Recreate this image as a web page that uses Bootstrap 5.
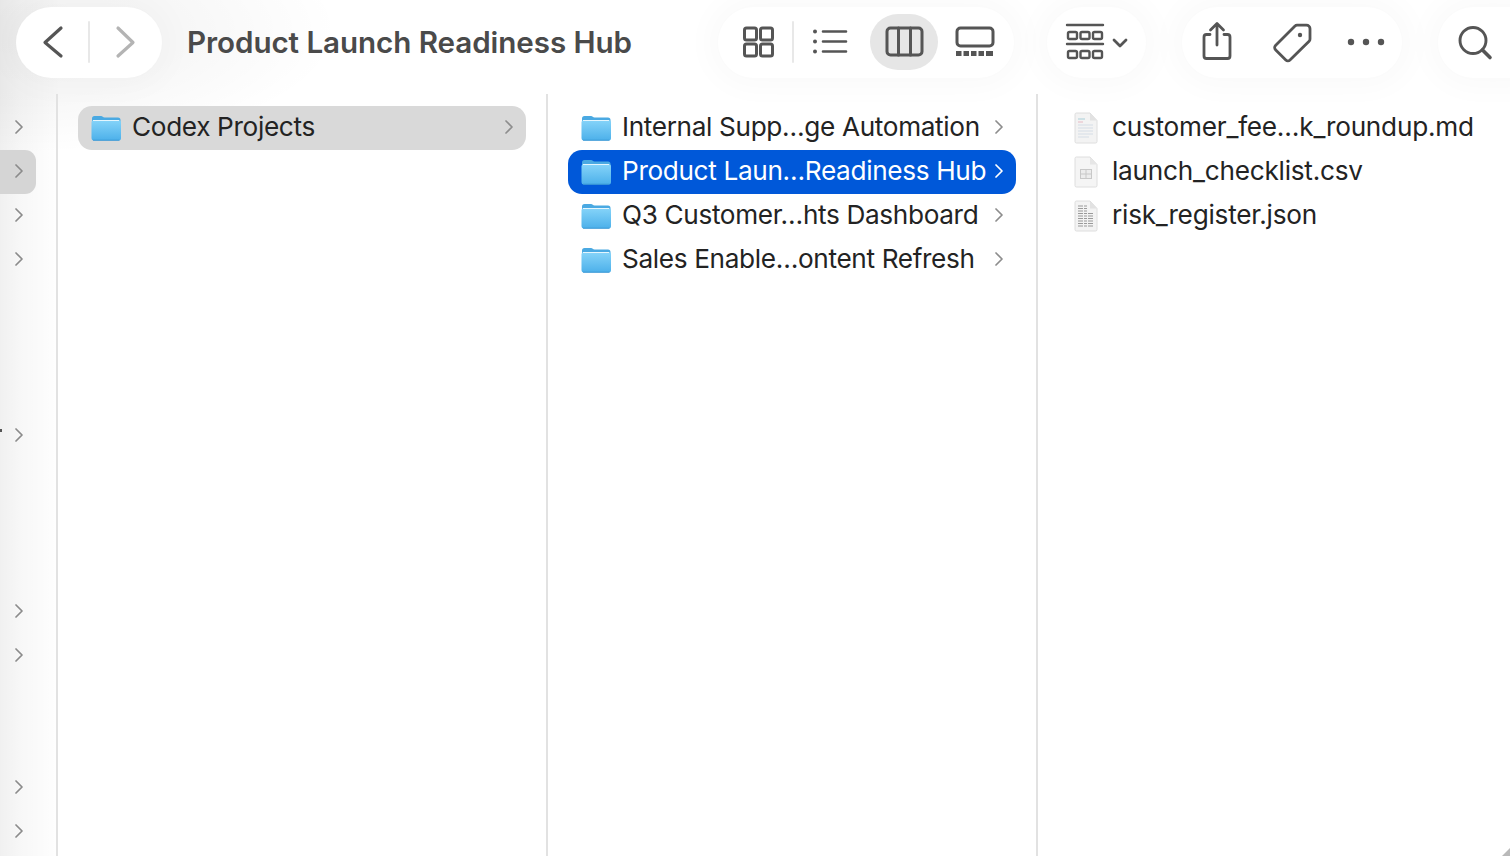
<!DOCTYPE html>
<html lang="en"><head><meta charset="utf-8"><title>Product Launch Readiness Hub</title>
<link href="https://cdn.jsdelivr.net/npm/bootstrap@5.3.0/dist/css/bootstrap.min.css" rel="stylesheet">
<style>
html,body{height:100%;margin:0;overflow:hidden;background:#fff;font-family:"Inter","Liberation Sans",sans-serif}
.frame{width:1510px;height:856px;position:relative;overflow:hidden;background:radial-gradient(ellipse 340px 125px at 0 30px,rgba(0,0,0,.045) 0,rgba(0,0,0,.03) 55%,rgba(0,0,0,0) 100%) no-repeat,linear-gradient(90deg,rgba(0,0,0,.06) 0,rgba(0,0,0,.03) 20px,rgba(0,0,0,.005) 57px,rgba(0,0,0,0) 58px) no-repeat,#fff}
.tb{height:94px;padding-top:7px}
.pill{height:71px;background:#fff;border-radius:36px;box-shadow:0 0 30px 10px rgba(0,0,0,.022);flex:none;position:relative}
.pill-nav{width:146px;margin-left:16px}
.pill-view{width:296px;margin-left:61px}
.pill-group{width:99px;margin-left:33px}
.pill-act{width:220px;margin-left:36px}
.pill-search{width:110px;margin-left:36px}
.tb-title{flex:none;width:470px;margin-left:25px;font-size:29.6px;font-weight:600;color:#4a4a4a;letter-spacing:-.07px;white-space:nowrap;line-height:71px}
.ic{position:absolute;overflow:visible;fill:none;stroke:#555;stroke-width:3;stroke-linecap:round;stroke-linejoin:round;left:0;top:0;width:100%;height:71px}
.view-on{position:absolute;left:152px;top:7px;width:68px;height:56px;border-radius:28px;background:#e6e6e6}
.cols{height:762px;position:relative}
.side{width:58px;flex:none;padding-top:12px;border-right:2px solid #e2e2e2}
.srow{height:44px;width:36px;color:#8b8b8b;padding-bottom:2px}
.srow.on{background:#d5d5d5;border-radius:0 11px 11px 0}
.fcol{width:490px;flex:none;padding:12px 20px 0 20px;border-right:2px solid #e2e2e2}
.fcol.last{width:472px;border-right:0;padding-right:0}
.frow{height:44px;border-radius:14px;font-size:26.2px;letter-spacing:-.35px;color:#232323;white-space:nowrap;padding-left:13px}
.frow.gray{background:#d9d9d9}
.frow.blue{background:#0058d9;color:#fff}
.frow .lbl{margin-left:11px;padding-bottom:2px}
.frow .fold{width:30px;height:26px;flex:none}
.filerow{padding-left:16px;letter-spacing:-.24px}
.filerow .lbl{margin-left:14px}
.filerow .doc{width:24px;height:32px;flex:none}
.chev{width:8px;height:14px;flex:none;fill:none;stroke:currentColor;stroke-width:1.7;stroke-linecap:round;stroke-linejoin:round}
.frow .chev{margin-left:auto;margin-right:13px;margin-bottom:2px;color:#8d8d8d}
.frow.blue .chev{color:#fff}
.srow .chev{margin-left:15px}
.speck{position:absolute;left:0;top:429px;width:2px;height:3px;background:#555}
.corner{position:absolute;right:0;bottom:0;width:0;height:0;border-style:solid;border-width:0 0 8px 8px;border-color:transparent transparent #b9b9b9 transparent}
</style></head><body>
<svg width="0" height="0" class="position-absolute"><defs>
<linearGradient id="fg" x1="0" y1="0" x2="0" y2="1"><stop offset="0" stop-color="#86d4f9"/><stop offset="1" stop-color="#4cb0ea"/></linearGradient>
<symbol id="folder" viewBox="0 0 30 26"><path d="M1 6V3.500A2.500 2.500 0 0 1 3.500 1h6.500c1.500 0 2 1.500 3.500 1.500H27A2.500 2.500 0 0 1 29.500 5v3H1z" fill="#4aa9e2"/><rect x="0.500" y="5" width="29.500" height="20.500" rx="2.500" fill="url(#fg)"/><path d="M2 5.500h26" stroke="#e4f6fe" stroke-width="1"/><path d="M2 25.200h26.500" stroke="#3c97d4" stroke-width="1"/></symbol>
<symbol id="cv" viewBox="0 0 8 14"><path d="M1 1l6 6-6 6"/></symbol>
</defs></svg>
<div class="frame">
<div class="tb d-flex align-items-start">
 <div class="pill pill-nav"><svg class="ic" viewBox="0 0 146 71"><path d="M45 21 29 35.500 45 49" stroke-width="3.200"/><path d="M73 15v40" stroke="#e8e8e8" stroke-width="2"/><path d="M102 21l15 14.500L102 49" stroke="#b4b4b4" stroke-width="3.200"/></svg></div>
 <div class="tb-title">Product Launch Readiness Hub</div>
 <div class="pill pill-view"><div class="view-on"></div><svg class="ic" viewBox="0 0 296 71">
  <rect x="26.500" y="21" width="12" height="12" rx="2"/><rect x="42.500" y="21" width="12" height="12" rx="2"/><rect x="26.500" y="37" width="12" height="12" rx="2"/><rect x="42.500" y="37" width="12" height="12" rx="2"/>
  <path d="M75 15v40" stroke="#e8e8e8" stroke-width="2"/>
  <path d="M105 24.500h23M105 34.500h23M105 44.500h23" stroke-width="2.600"/><g fill="#555" stroke="none"><circle cx="97" cy="24.500" r="2"/><circle cx="97" cy="34.500" r="2"/><circle cx="97" cy="44.500" r="2"/></g>
  <rect x="169" y="21" width="35" height="27" rx="3.500"/><path d="M180.500 21v27M192.500 21v27"/>
  <rect x="239" y="21" width="36" height="18" rx="3.500"/><g fill="#555" stroke="none"><rect x="238" y="44" width="5.500" height="5"/><rect x="245.500" y="44" width="5.500" height="5"/><rect x="253" y="44" width="5.500" height="5"/><rect x="260.500" y="44" width="5.500" height="5"/><rect x="268" y="44" width="7" height="5"/></g>
 </svg></div>
 <div class="pill pill-group"><svg class="ic" viewBox="0 0 99 71">
  <path d="M20 18h36M20 37h36" stroke-width="2.400"/>
  <g stroke-width="2.400"><rect x="21" y="25" width="9" height="7" rx="1.500"/><rect x="33.500" y="25" width="9" height="7" rx="1.500"/><rect x="46" y="25" width="9" height="7" rx="1.500"/><rect x="21" y="44" width="9" height="7" rx="1.500"/><rect x="33.500" y="44" width="9" height="7" rx="1.500"/><rect x="46" y="44" width="9" height="7" rx="1.500"/></g>
  <path d="M67 33l6 6 6-6" stroke-width="2.800"/>
 </svg></div>
 <div class="pill pill-act"><svg class="ic" viewBox="0 0 220 71">
  <path d="M28 27.500h-3.500a2.500 2.500 0 0 0-2.500 2.500v19a2.500 2.500 0 0 0 2.500 2.500h21a2.500 2.500 0 0 0 2.500-2.500V30a2.500 2.500 0 0 0-2.500-2.500H42" stroke-width="2.800"/>
  <path d="M35 38V17M28.500 23l6.500-6.500 6.500 6.500" stroke-width="2.800"/>
  <path d="M93.500 38.500 113 19a3 3 0 0 1 2-.8h9.500a3.500 3.500 0 0 1 3.500 3.500V32a3 3 0 0 1-.9 2.200L108 53a3 3 0 0 1-4.200 0L93.500 42.700a3 3 0 0 1 0-4.200z" stroke-width="2.800"/>
  <circle cx="118" cy="28" r="2.200" fill="#555" stroke="none"/>
  <g fill="#555" stroke="none"><circle cx="169" cy="35" r="3.200"/><circle cx="184" cy="35" r="3.200"/><circle cx="199" cy="35" r="3.200"/></g>
 </svg></div>
 <div class="pill pill-search"><svg class="ic" viewBox="0 0 110 71"><circle cx="35" cy="33.500" r="13" stroke-width="2.900"/><path d="M44.500 43 52 50.500" stroke-width="3.600"/></svg></div>
</div>
<div class="cols d-flex">
 <div class="side">
  <div class="srow d-flex align-items-center"><svg class="chev"><use href="#cv"/></svg></div>
  <div class="srow on d-flex align-items-center"><svg class="chev"><use href="#cv"/></svg></div>
  <div class="srow d-flex align-items-center"><svg class="chev"><use href="#cv"/></svg></div>
  <div class="srow d-flex align-items-center"><svg class="chev"><use href="#cv"/></svg></div>
  <div class="srow"></div><div class="srow"></div><div class="srow"></div>
  <div class="srow d-flex align-items-center"><svg class="chev"><use href="#cv"/></svg></div>
  <div class="srow"></div><div class="srow"></div><div class="srow"></div>
  <div class="srow d-flex align-items-center"><svg class="chev"><use href="#cv"/></svg></div>
  <div class="srow d-flex align-items-center"><svg class="chev"><use href="#cv"/></svg></div>
  <div class="srow"></div><div class="srow"></div>
  <div class="srow d-flex align-items-center"><svg class="chev"><use href="#cv"/></svg></div>
  <div class="srow d-flex align-items-center"><svg class="chev"><use href="#cv"/></svg></div>
 </div>
 <div class="fcol">
  <div class="frow gray d-flex align-items-center"><svg class="fold"><use href="#folder"/></svg><span class="lbl">Codex Projects</span><svg class="chev"><use href="#cv"/></svg></div>
 </div>
 <div class="fcol">
  <div class="frow d-flex align-items-center"><svg class="fold"><use href="#folder"/></svg><span class="lbl">Internal Supp…ge Automation</span><svg class="chev"><use href="#cv"/></svg></div>
  <div class="frow blue d-flex align-items-center"><svg class="fold"><use href="#folder"/></svg><span class="lbl">Product Laun…Readiness Hub</span><svg class="chev"><use href="#cv"/></svg></div>
  <div class="frow d-flex align-items-center"><svg class="fold"><use href="#folder"/></svg><span class="lbl">Q3 Customer…hts Dashboard</span><svg class="chev"><use href="#cv"/></svg></div>
  <div class="frow d-flex align-items-center"><svg class="fold"><use href="#folder"/></svg><span class="lbl">Sales Enable…ontent Refresh</span><svg class="chev"><use href="#cv"/></svg></div>
 </div>
 <div class="fcol last">
  <div class="frow filerow d-flex align-items-center"><svg class="doc" viewBox="0 0 24 32"><path d="M1 2.500A1.500 1.500 0 0 1 2.500 1H16l7 7.500V29.500a1.500 1.500 0 0 1-1.500 1.500h-19A1.500 1.500 0 0 1 1 29.500z" fill="#f3f3f3" stroke="#dedede"/><path d="M16 1v7.500h7z" fill="#e2e2e2"/><path d="M4 7h7" stroke="#a9cfd8"/><path d="M4 10h5" stroke="#e7b9c4"/><path d="M4 13h15M4 16h15M4 19h15M4 22h15M4 25h11" stroke="#d5dde6"/></svg><span class="lbl">customer_fee…k_roundup.md</span></div>
  <div class="frow filerow d-flex align-items-center"><svg class="doc" viewBox="0 0 24 32"><path d="M1 2.500A1.500 1.500 0 0 1 2.500 1H16l7 7.500V29.500a1.500 1.500 0 0 1-1.500 1.500h-19A1.500 1.500 0 0 1 1 29.500z" fill="#f5f5f5" stroke="#dedede"/><path d="M16 1v7.500h7z" fill="#e6e6e6"/><rect x="6.500" y="13.500" width="11" height="9" fill="#ececec" stroke="#c8c8c8"/><path d="M6.500 18h11M12 13.500v9" stroke="#c8c8c8"/></svg><span class="lbl">launch_checklist.csv</span></div>
  <div class="frow filerow d-flex align-items-center"><svg class="doc" viewBox="0 0 24 32"><path d="M1 2.500A1.500 1.500 0 0 1 2.500 1H16l7 7.500V29.500a1.500 1.500 0 0 1-1.500 1.500h-19A1.500 1.500 0 0 1 1 29.500z" fill="#f3f3f3" stroke="#dedede"/><path d="M16 1v7.500h7z" fill="#e2e2e2"/><path d="M4 6h9M4 8.500h9M4 11h10M4 13.500h15M4 16h15M4 18.500h15M4 21h15M4 23.500h15M4 26h15" stroke="#9a9a9a" stroke-width="1.100" stroke-dasharray="5 1 3 1"/></svg><span class="lbl">risk_register.json</span></div>
 </div>
</div>
<div class="speck"></div><div class="corner"></div>
</div>
<script src="https://cdn.jsdelivr.net/npm/bootstrap@5.3.0/dist/js/bootstrap.bundle.min.js"></script>
</body></html>
